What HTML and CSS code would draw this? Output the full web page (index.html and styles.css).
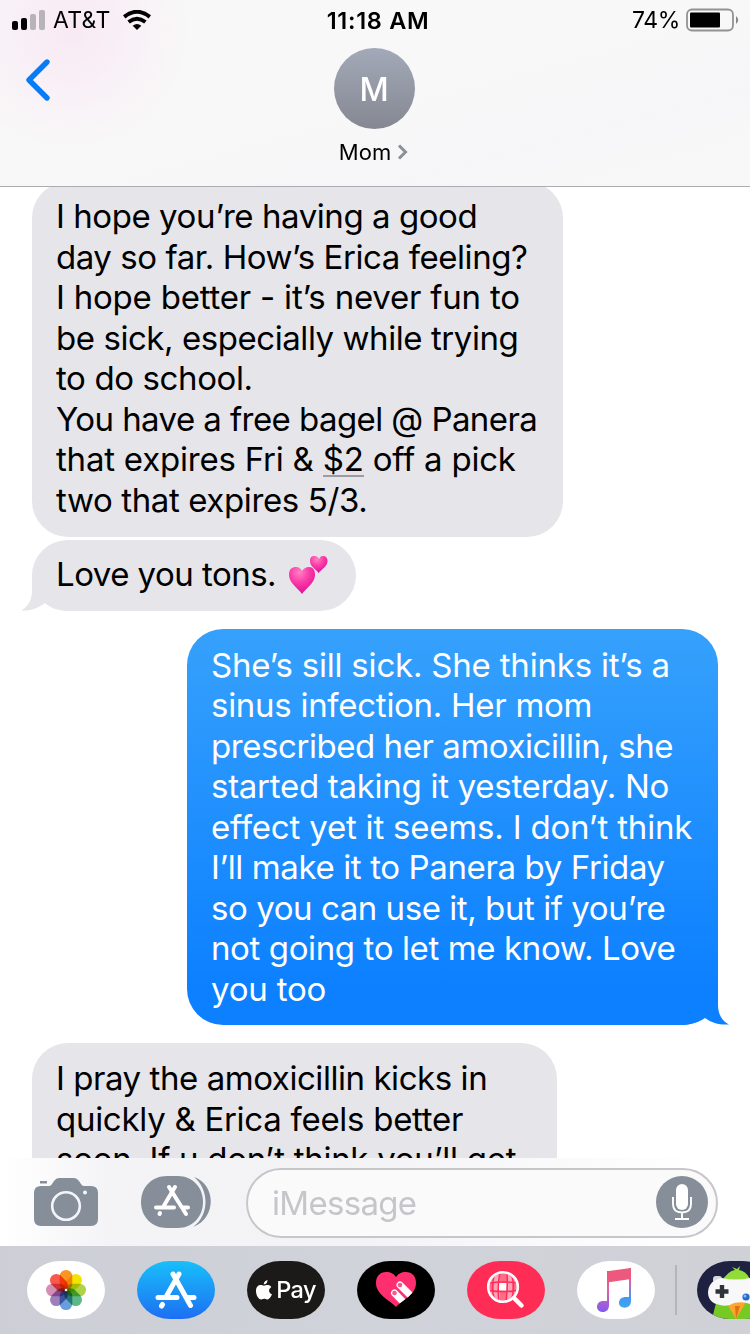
FILE: index.html
```html
<!DOCTYPE html>
<html lang="en">
<head>
<meta charset="utf-8">
<title>Messages</title>
<link rel="stylesheet" href="styles.css">
</head>
<body>
<div class="phone">
  <header class="header">
    <div class="status">
      <div class="status-left">
        <svg class="signal" width="33" height="20" viewBox="0 0 33 20"><rect x="0" y="11" width="6" height="9" rx="2"/><rect x="9" y="8" width="6" height="12" rx="2"/><g fill="#b8b2b9"><rect x="18" y="4" width="6" height="16" rx="2"/><rect x="27" y="0" width="6" height="20" rx="2"/></g></svg>
        <span class="carrier">AT&amp;T</span>
        <svg class="wifi" width="28" height="20" viewBox="0 0 28 20"><g fill="none" stroke="#000" stroke-width="4"><path d="M1.2 6.8Q14-3.200 26.800 6.800"/><path d="M5.600 12Q14 5.600 22.400 12"/></g><path d="M9.700 15.700Q14 12.200 18.300 15.700L14 20z"/></svg>
      </div>
      <div class="clock">11:18 AM</div>
      <div class="status-right">
        <span class="percent">74%</span>
        <svg width="53" height="24" viewBox="0 0 53 24"><rect x="1" y="1.500" width="46" height="21" rx="5" fill="none" stroke="#929292" stroke-width="1.800"/><rect x="4" y="4.500" width="30" height="15" rx="1"/><path d="M50 8q4.500 4 0 8z" fill="#888"/></svg>
      </div>
    </div>
    <div class="nav">
      <svg class="back" width="26" height="44" viewBox="0 0 26 44"><path d="M22 4L4 22L22 40" fill="none" stroke="#087cf5" stroke-width="5.400" stroke-linecap="round" stroke-linejoin="round"/></svg>
      <div class="contact">
        <div class="avatar">M</div>
        <div class="name">Mom<svg width="11" height="16" viewBox="0 0 11 16"><path d="M2 1.500L8.500 8L2 14.500" fill="none" stroke="#8d8f96" stroke-width="3"/></svg></div>
      </div>
    </div>
  </header>

  <main class="chat">
    <div class="bubble in first">
      <p class="k37">I hope you’re having a good</p>
      <p class="k37">day so far. How’s Erica feeling?</p>
      <p class="k17">I hope better - it’s never fun to</p>
      <p class="k37">be sick, especially while trying</p>
      <p class="k30">to do school.</p>
      <p class="k50">You have a free bagel @ Panera</p>
      <p class="k17">that expires Fri &amp; <span class="amount">$2</span> off a pick</p>
      <p class="k30">two that expires 5/3.</p>
    </div>
    <div class="bubble in second">
      <p class="k43">Love you tons. <svg class="hearts" width="40" height="40" viewBox="0 0 40 40" role="img" aria-label="two hearts"><defs><radialGradient id="pink" cx=".4" cy=".2" r=".85"><stop offset="0" stop-color="#ff82c5"/><stop offset=".45" stop-color="#fb3ba8"/><stop offset="1" stop-color="#d90a91"/></radialGradient></defs><path fill="url(#pink)" d="M14 39C10 33 1 28 1 20C1 14 4 12 8 12C11 12 13 14 14 16C15 14 18 12 21 12C25 12 27 15 27 20C27 28 18 33 14 39z"/><path fill="url(#pink)" d="M30.500 18C28 14 22 11.500 22 6C22 2 24 1 26.500 1C29 1 30 2 31 4C32 2 33 1 35 1C38 1 39.500 3 39.500 6C39.500 11 34 14 30.500 18z"/></svg></p>
      <svg class="tail tail-in" width="50" height="36" viewBox="0 0 50 36"><path fill="#e5e5ea" d="M11 0V16C11 25 7 32 0 35.500C10 36 17 33 24 28C31 34 40 36 50 36V24L22 0z"/></svg>
    </div>
    <div class="bubble out">
      <p class="k12">She’s sill sick. She thinks it’s a</p>
      <p class="k25">sinus infection. Her mom</p>
      <p class="k37">prescribed her amoxicillin, she</p>
      <p class="k25">started taking it yesterday. No</p>
      <p class="k12">effect yet it seems. I don’t think</p>
      <p class="k30">I’ll make it to Panera by Friday</p>
      <p class="k37">so you can use it, but if you’re</p>
      <p class="k30">not going to let me know. Love</p>
      <p class="k12">you too</p>
      <svg class="tail tail-out" width="50" height="36" viewBox="0 0 50 36"><path fill="#0c80ff" d="M39 0V16C39 25 43 32 50 35.500C40 36 33 34 26 29C19 34 10 36 0 36V30z"/></svg>
    </div>
    <div class="bubble in last">
      <p class="k37">I pray the amoxicillin kicks in</p>
      <p class="k25">quickly &amp; Erica feels better</p>
      <p class="k25">soon. If u don’t think you’ll get</p>
    </div>
  </main>

  <div class="compose">
    <svg class="camera" width="64" height="48" viewBox="0 0 64 48"><path fill="#868e99" d="M6 3h7v2.500H6zM7 8h8q2 0 3-2l2-3q2-3 5-3h15q3 0 5 3l2 3q1 2 3 2h7q7 0 7 7v26q0 7-7 7H7q-7 0-7-7V15q0-7 7-7z"/><circle cx="32" cy="28" r="13.800" fill="none" stroke="#f4f5fb" stroke-width="2.600"/><circle cx="51" cy="14.500" r="2" fill="#f4f5fb"/></svg>
    <svg class="apps" width="71" height="52" viewBox="0 0 71 52"><path d="M26 0H37C51 0 62 11 62 26S51 52 37 52H26C11 52 0 41 0 26S11 0 26 0z" fill="#868e99"/><path d="M53 1C76 9 75 43 52 51C69 39 68 13 53 1z" fill="#868e99"/><g fill="none" stroke="#fff" stroke-linecap="round" stroke-width="4"><path d="M28 11L45 38M34 11L23 29.500M15 31.500H33M41 31.500H47M19 37L18.500 38"/></g></svg>
    <div class="field"><span>iMessage</span>
      <svg width="52" height="52" viewBox="0 0 52 52"><circle cx="26" cy="26" r="26" fill="#868e99"/><rect x="20" y="8" width="12" height="26" rx="6" fill="#fff"/><path d="M17 21v7q0 8.500 9 8.500t9-8.500v-7M26 36.500V43M19 43h14" fill="none" stroke="#fff" stroke-width="1.900"/></svg>
    </div>
  </div>

  <footer class="strip">
    <div class="app white"><svg width="42" height="42" viewBox="-21 -21 42 42"><g class="petals"><rect x="-6.300" y="-20" width="12.600" height="20" rx="6.300" fill="#fb9420"/><rect x="-6.300" y="-20" width="12.600" height="20" rx="6.300" fill="#f3e300" transform="rotate(45)"/><rect x="-6.300" y="-20" width="12.600" height="20" rx="6.300" fill="#aed34b" transform="rotate(90)"/><rect x="-6.300" y="-20" width="12.600" height="20" rx="6.300" fill="#5cb888" transform="rotate(135)"/><rect x="-6.300" y="-20" width="12.600" height="20" rx="6.300" fill="#679fdd" transform="rotate(180)"/><rect x="-6.300" y="-20" width="12.600" height="20" rx="6.300" fill="#9c80bb" transform="rotate(225)"/><rect x="-6.300" y="-20" width="12.600" height="20" rx="6.300" fill="#d48fb6" transform="rotate(270)"/><rect x="-6.300" y="-20" width="12.600" height="20" rx="6.300" fill="#f65a4b" transform="rotate(315)"/></g><circle r="1.300" fill="#fff"/></svg></div>
    <div class="app store"><svg width="42" height="38" viewBox="0 0 42 38"><g fill="none" stroke="#fff" stroke-linecap="round" stroke-width="5"><path d="M18 3L35.500 34.500M24 3L11.500 25M3 26.500H22M32 26.500H39M7.500 33.500L6.500 35"/></g></svg></div>
    <div class="app pay"><svg width="16" height="20" viewBox="0 0 16 20"><path fill="#fff" d="M11.500 0Q11.500 4 7.700 4.600Q7.800 1 11.500 0zM8 5.700C9.500 5.700 13 3.500 15.300 7C12 9.500 12.500 13 16 14.300C14 19 12 20 10.200 19.300C8.500 18.500 7.500 18.700 6 19.300C3 20.500 0 15.500 0 11C0 5.500 4 4.200 8 5.700z"/></svg><span>Pay</span></div>
    <div class="app touch"><svg width="40" height="36" viewBox="0 0 40 36"><defs><clipPath id="heart"><path d="M20 35C14 28 0 23 0 11C0 4 4 0 10 0C15 0 18 2 20 5C22 2 25 0 30 0C36 0 40 4 40 11C40 23 26 28 20 35z"/></clipPath></defs><g clip-path="url(#heart)"><path fill="#ff2e6e" d="M0 0h40v36H0z"/><g stroke="#fff" stroke-width="7" stroke-linecap="round"><path d="M18.500 21L33 36M24 13L38 27"/></g><g fill="#ff5588"><circle cx="18.500" cy="21" r="2.300"/><circle cx="24" cy="13" r="2.300"/></g></g></svg></div>
    <div class="app search"><svg width="40" height="40" viewBox="0 0 40 40"><defs><clipPath id="lens"><circle cx="17" cy="17" r="13.500"/></clipPath></defs><g clip-path="url(#lens)"><path fill="#ffa4b8" d="M3 3h28v28H3z"/><path fill="#ff6d8a" d="M14 3h7v10h-7zM14 21h7v10h-7zM3 13h5v8H3zM26 13h5v8h-5z"/><path fill="#fff" d="M13 13h7.500v7.500H13z"/><path d="M14 2Q11 17 13 32M21 2Q22 17 20 32M8 6Q5 17 8 28M26 6Q29 17 26 28M2 13Q17 11 32 13M2 20.500Q17 22.500 32 20.500" fill="none" stroke="#ff2d55" stroke-width="1.500"/></g><circle cx="17" cy="17" r="14.800" fill="none" stroke="#fff" stroke-width="2.600"/><path d="M28 28L35.500 35.500" stroke="#fff" stroke-width="4.500" stroke-linecap="round"/></svg></div>
    <div class="app white music"><svg width="36" height="46" viewBox="0 0 36 46"><defs><linearGradient id="note" x1="0" y1="0" x2="0" y2="1"><stop offset="0" stop-color="#fc4d62"/><stop offset=".4" stop-color="#c869ba"/><stop offset=".75" stop-color="#4398f2"/><stop offset="1" stop-color="#3ba5ef"/></linearGradient><linearGradient id="noteL" x1="0" y1="0" x2="0" y2="1"><stop offset="0" stop-color="#fc4d62"/><stop offset=".45" stop-color="#e260a6"/><stop offset="1" stop-color="#805cf4"/></linearGradient></defs><path fill="url(#noteL)" d="M11 4h2v34C13 48 1 46 1 40C1 36 4 34 7 34H11z"/><path fill="url(#note)" d="M33 1h2v33C35 43 23 42 23 36C23 32 26 30 30 30H33z"/><path fill="#ed587e" d="M11 6q0-1.500 2-2L33 1.300q2-.3 2 1.200V12L11 15.500z"/></svg></div>
    <div class="divider"></div>
    <div class="app game"><svg width="53" height="58" viewBox="0 0 53 58"><path fill="#77ca23" d="M15 58L19 42H53V58z"/><path fill="#91dc38" d="M25 20Q31 10 38 9L35 6L40 8L43 5L42 9Q49 10 53 18V24z"/><path fill="#ffa52d" d="M29 41H49L39 58z"/><path fill="#d87512" d="M38 45h5l-4 13z"/><rect x="16" y="15" width="9" height="7" rx="3" fill="#d5d9df"/><path fill="#f8f8fa" d="M25 17Q38 20 53 17V43Q46 40 37 42Q31 46 23 44Q11 42 11 31Q12 19 25 17z"/><path d="M25 24v13M18.500 30.500h13" stroke="#303338" stroke-width="4.400"/><circle cx="49" cy="36" r="3.600" fill="#2868c7"/><circle cx="48" cy="35" r="1.500" fill="#77bfff"/></svg></div>
  </footer>
</div>
</body>
</html>
```
FILE: styles.css
```css
* { box-sizing: border-box; }
body { margin: 0; background: #fff; font-family: Inter, "Liberation Sans", sans-serif; color: #000; }
p { margin: 0; }
svg { display: block; flex: none; }

.phone { width: 750px; height: 1334px; display: flex; flex-direction: column; overflow: hidden; }

.header {
  height: 187px; flex: none; border-bottom: 1px solid #adadb1;
  background: radial-gradient(circle at 70px 30px, #f8e9f4 0, rgba(248, 236, 246, .6) 60px, rgba(248, 248, 248, 0) 120px), linear-gradient(165deg, #f8f8f8 50%, #f6f6f9 75%, #f8f8f8 90%);
}
.status { height: 40px; display: grid; grid-template-columns: 1fr auto 1fr; align-items: center; padding: 0 11px 0 12px; font-size: 23px; }
.status-left, .status-right { display: flex; align-items: center; }
.carrier { margin-left: 8px; letter-spacing: .3px; }
.wifi { margin-left: 12px; }
.clock { font-weight: 600; font-size: 23.500px; letter-spacing: .7px; margin-left: 5px; }
.status-right { justify-content: flex-end; gap: 6px; }
.percent { letter-spacing: -.4px; }

.nav { display: grid; grid-template-columns: 1fr auto 1fr; padding: 8px 2px 0 0; }
.back { margin: 10px 0 0 25px; }
.contact { display: flex; flex-direction: column; align-items: center; }
.avatar { width: 81px; height: 81px; border-radius: 50%; background: linear-gradient(#a3a9b8, #858892); color: #fff; font-size: 32px; font-weight: 500; line-height: 83px; text-align: center; }
.name { display: flex; align-items: center; gap: 6px; margin: 8px 1px 0 0; font-size: 22px; line-height: 30px; letter-spacing: .1px; }

.chat { height: 971px; flex: none; overflow: hidden; display: flex; flex-direction: column; align-items: flex-start; }
.bubble { position: relative; flex: none; border-radius: 36px; padding: 15px 24px 16px; font-size: 33px; line-height: 40.500px; white-space: nowrap; }
.in { margin-left: 32px; background: #e5e5ea; }
.first { width: 531px; height: 355px; margin-top: -5px; padding-top: 14.400px; }
.second { width: 324px; height: 71px; margin-top: 3px; padding-top: 14px; }
.out { width: 531px; height: 396px; margin: 18px 0 0 187px; padding-top: 15.600px; color: #fff; background: linear-gradient(#36a1fc, #0c80ff 90%); }
.last { width: 525px; margin-top: 18px; }
.k12 { letter-spacing: -.2px; }
.k17 { letter-spacing: -.21px; }
.k25 { letter-spacing: -.28px; }
.k30 { letter-spacing: -.38px; }
.k37 { letter-spacing: -.44px; }
.k43 { letter-spacing: -.52px; }
.k50 { letter-spacing: -.57px; }
.amount { border-bottom: 2px solid #9b9ba0; display: inline-block; line-height: 32px; }
.second p { display: flex; gap: 12px; }
.hearts { margin-top: 1px; }
.tail { position: absolute; bottom: 0; }
.tail-in { left: -11px; }
.tail-out { right: -11px; }

.compose { height: 88px; flex: none; display: flex; align-items: center; padding: 0 32px 0 34px; background: linear-gradient(90deg, #fff 0, #f4f4f7 110px, #f3f3f6 350px, #fff 700px); }
.apps { margin-left: 43px; }
.field { flex: 1; height: 70px; margin: 2px 0 0 34px; border: 2px solid #c7c7cb; border-radius: 35px; background: #fafafb; display: flex; align-items: center; justify-content: space-between; padding: 0 8px 2px 24px; font-size: 33px; color: #c5c5ca; letter-spacing: -.7px; }
.field span { padding-top: 2px; }

.strip { height: 88px; flex: none; display: flex; align-items: center; padding-left: 27px; background: linear-gradient(90deg, #cdced6, #d0d3da 50%, #d0d1d7); }
.app { width: 78px; height: 58px; flex: none; margin-right: 32px; border-radius: 33px / 29px; display: flex; align-items: center; justify-content: center; overflow: hidden; }
.white { background: #fff; }
.petals rect { mix-blend-mode: multiply; }
.store { background: linear-gradient(#18bffb, #1d6ff2); }
.pay { background: #1b1a19; color: #fff; font-size: 23.500px; font-weight: 500; gap: 4px; letter-spacing: -.6px; }
.pay span { margin-top: -2px; }
.touch { background: #000; }
.search { background: #ff2d55; }
.music { padding-right: 4px; }
.divider { width: 2px; height: 50px; flex: none; margin: 0 20px 0 -12px; background: #b4b5bb; }
.game { justify-content: flex-start; background: #1e2140; }
```
